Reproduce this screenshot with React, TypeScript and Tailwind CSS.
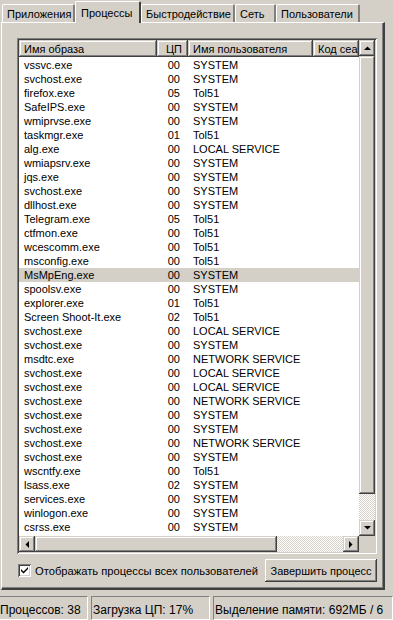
import React from 'react'

type Proc = [string, string, string]

const procs: Proc[] = [
  ['vssvc.exe', '00', 'SYSTEM'],
  ['svchost.exe', '00', 'SYSTEM'],
  ['firefox.exe', '05', 'Tol51'],
  ['SafeIPS.exe', '00', 'SYSTEM'],
  ['wmiprvse.exe', '00', 'SYSTEM'],
  ['taskmgr.exe', '01', 'Tol51'],
  ['alg.exe', '00', 'LOCAL SERVICE'],
  ['wmiapsrv.exe', '00', 'SYSTEM'],
  ['jqs.exe', '00', 'SYSTEM'],
  ['svchost.exe', '00', 'SYSTEM'],
  ['dllhost.exe', '00', 'SYSTEM'],
  ['Telegram.exe', '05', 'Tol51'],
  ['ctfmon.exe', '00', 'Tol51'],
  ['wcescomm.exe', '00', 'Tol51'],
  ['msconfig.exe', '00', 'Tol51'],
  ['MsMpEng.exe', '00', 'SYSTEM'],
  ['spoolsv.exe', '00', 'SYSTEM'],
  ['explorer.exe', '01', 'Tol51'],
  ['Screen Shoot-It.exe', '02', 'Tol51'],
  ['svchost.exe', '00', 'LOCAL SERVICE'],
  ['svchost.exe', '00', 'SYSTEM'],
  ['msdtc.exe', '00', 'NETWORK SERVICE'],
  ['svchost.exe', '00', 'LOCAL SERVICE'],
  ['svchost.exe', '00', 'LOCAL SERVICE'],
  ['svchost.exe', '00', 'NETWORK SERVICE'],
  ['svchost.exe', '00', 'SYSTEM'],
  ['svchost.exe', '00', 'SYSTEM'],
  ['svchost.exe', '00', 'NETWORK SERVICE'],
  ['svchost.exe', '00', 'SYSTEM'],
  ['wscntfy.exe', '00', 'Tol51'],
  ['lsass.exe', '02', 'SYSTEM'],
  ['services.exe', '00', 'SYSTEM'],
  ['winlogon.exe', '00', 'SYSTEM'],
  ['csrss.exe', '00', 'SYSTEM'],
]

const raised =
  'bg-[#d4d0c8] shadow-[inset_-1px_-1px_#404040,inset_1px_1px_#d4d0c8,inset_-2px_-2px_#808080,inset_2px_2px_#ffffff]'
const sunken =
  'shadow-[inset_1px_1px_#808080,inset_-1px_-1px_#ffffff,inset_2px_2px_#404040,inset_-2px_-2px_#d4d0c8]'
const checker =
  'bg-[image:repeating-conic-gradient(#d4d0c8_0%_25%,#ffffff_0%_50%)] bg-[length:2px_2px] bg-size-[2px_2px]'

const Arrow = ({ dir }: { dir: 'up' | 'down' | 'left' | 'right' }) => {
  const pts = {
    up: '0,4 7,4 3.5,0.5',
    down: '0,0 7,0 3.5,3.5',
    left: '4,0 4,7 0.5,3.5',
    right: '0,0 0,7 3.5,3.5',
  }[dir]
  const vert = dir === 'up' || dir === 'down'
  return (
    <svg width={vert ? 7 : 4} height={vert ? 4 : 7} viewBox={vert ? '0 0 7 4' : '0 0 4 7'}>
      <polygon points={pts} fill="#000" />
    </svg>
  )
}

const ScrollBtn = ({ dir }: { dir: 'up' | 'down' | 'left' | 'right' }) => (
  <div className={`w-[16px] h-[16px] shrink-0 flex items-center justify-center ${raised}`}>
    <Arrow dir={dir} />
  </div>
)

const Tab = ({ label, active, w }: { label: string; active?: boolean; w: string }) =>
  active ? (
    <div
      className={`${w} h-[22px] -mb-px -mx-[2px] relative z-10 bg-[#d4d0c8] border-t border-l border-white border-r-2 border-r-[#404040] rounded-t-[2px] flex items-start pt-[4px] px-[5px]`}
    >
      {label}
    </div>
  ) : (
    <div
      className={`${w} h-[18px] bg-[#d4d0c8] border-t border-l border-white border-r-2 border-r-[#808080] rounded-t-[2px] flex items-start pt-[2px] px-[4px]`}
    >
      {label}
    </div>
  )

export default function App() {
  return (
    <div className="w-[393px] h-[620px] overflow-hidden bg-[#d4d0c8] text-[11px] leading-[14px] text-black font-['Liberation_Sans',Arial,sans-serif] flex flex-col">
      {/* tabs */}
      <div className="h-[22px] flex items-end pl-[2px] shrink-0">
        <Tab label="Приложения" w="w-[73px]" />
        <div className="w-[2px]" />
        <Tab label="Процессы" active w="w-[66px]" />
        <div className="w-[2px]" />
        <Tab label="Быстродействие" w="w-[94px]" />
        <Tab label="Сеть" w="w-[41px]" />
        <Tab label="Пользователи" w="w-[84px]" />
      </div>

      {/* tab page */}
      <div className="ml-[1px] w-[384px] h-[568px] shrink-0 border-t border-l border-white border-r-2 border-r-[#404040] border-b-2 border-b-[#404040] shadow-[inset_-1px_-1px_#808080] pt-[15px] pl-[15px] flex flex-col">
        {/* listview */}
        <div className={`w-[360px] h-[516px] p-[2px] bg-white ${sunken}`}>
          <div className="grid grid-cols-[340px_16px] grid-rows-[496px_16px] h-full">
            <div className="overflow-hidden flex flex-col">
              <div className="flex h-[17px] shrink-0">
                <div className={`w-[138px] shrink-0 h-full pl-[5px] pt-[2px] ${raised}`}>Имя образа</div>
                <div className={`w-[31px] shrink-0 h-full pr-[6px] pt-[2px] text-right ${raised}`}>ЦП</div>
                <div className={`w-[125px] shrink-0 h-full pl-[5px] pt-[2px] ${raised}`}>Имя пользователя</div>
                <div className={`w-[46px] shrink-0 h-full pl-[5px] pt-[2px] whitespace-nowrap ${raised}`}>Код сеа</div>
              </div>
              <div className="flex-1 overflow-hidden pt-[1px]">
                {procs.map(([name, cpu, user], i) => (
                  <div
                    key={i}
                    className={`flex h-[14px] items-center ${name === 'MsMpEng.exe' ? 'bg-[#d4d0c8]' : ''}`}
                  >
                    <div className="w-[138px] pl-[5px] whitespace-nowrap">{name}</div>
                    <div className="w-[31px] pr-[8px] text-right">{cpu}</div>
                    <div className="w-[125px] pl-[5px] whitespace-nowrap">{user}</div>
                  </div>
                ))}
              </div>
            </div>

            {/* vertical scrollbar */}
            <div className="flex flex-col">
              <ScrollBtn dir="up" />
              <div className={`h-[438px] shrink-0 ${raised}`} />
              <div className={`flex-1 ${checker}`} />
              <ScrollBtn dir="down" />
            </div>

            {/* horizontal scrollbar */}
            <div className="flex">
              <ScrollBtn dir="left" />
              <div className={`w-[242px] shrink-0 ${raised}`} />
              <div className={`flex-1 ${checker}`} />
              <ScrollBtn dir="right" />
            </div>
            <div className="bg-[#d4d0c8]" />
          </div>
        </div>

        {/* bottom controls */}
        <div className="flex items-center mt-[5px] w-[360px]">
          <div className="flex items-center gap-[4px] pl-[1px]">
            <div className={`w-[13px] h-[13px] bg-white ${sunken} flex items-center justify-center`}>
              <svg width="7" height="7" viewBox="0 0 7 7">
                <path d="M0 2 L2.5 4.5 L7 0 L7 2 L2.5 6.5 L0 4 Z" fill="#000" />
              </svg>
            </div>
            <span className="whitespace-nowrap text-[11.2px]">Отображать процессы всех пользователей</span>
          </div>
          <div className="flex-1" />
          <div className="w-[112px] h-[23px] flex items-center justify-center whitespace-nowrap bg-[#d4d0c8] shadow-[inset_-1px_-1px_#404040,inset_1px_1px_#ffffff,inset_-2px_-2px_#808080,inset_2px_2px_#d4d0c8]">
            Завершить процесс
          </div>
        </div>
      </div>

      {/* status bar */}
      <div className="flex mt-[6px] h-[24px] gap-[3px] text-[12px]">
        <div className="w-[88px] shrink-0 h-full border-t border-b border-r border-t-[#808080] border-r-white border-b-white pt-[6px] whitespace-nowrap overflow-hidden">
          Процессов: 38
        </div>
        <div className="w-[119px] shrink-0 h-full border border-t-[#808080] border-l-[#808080] border-r-white border-b-white pt-[6px] pl-[1px] whitespace-nowrap overflow-hidden">
          Загрузка ЦП: 17%
        </div>
        <div className="w-[180px] shrink-0 h-full border border-t-[#808080] border-l-[#808080] border-r-white border-b-white pt-[6px] pl-[1px] whitespace-nowrap overflow-hidden">
          Выделение памяти: 692МБ / 6
        </div>
      </div>
    </div>
  )
}
